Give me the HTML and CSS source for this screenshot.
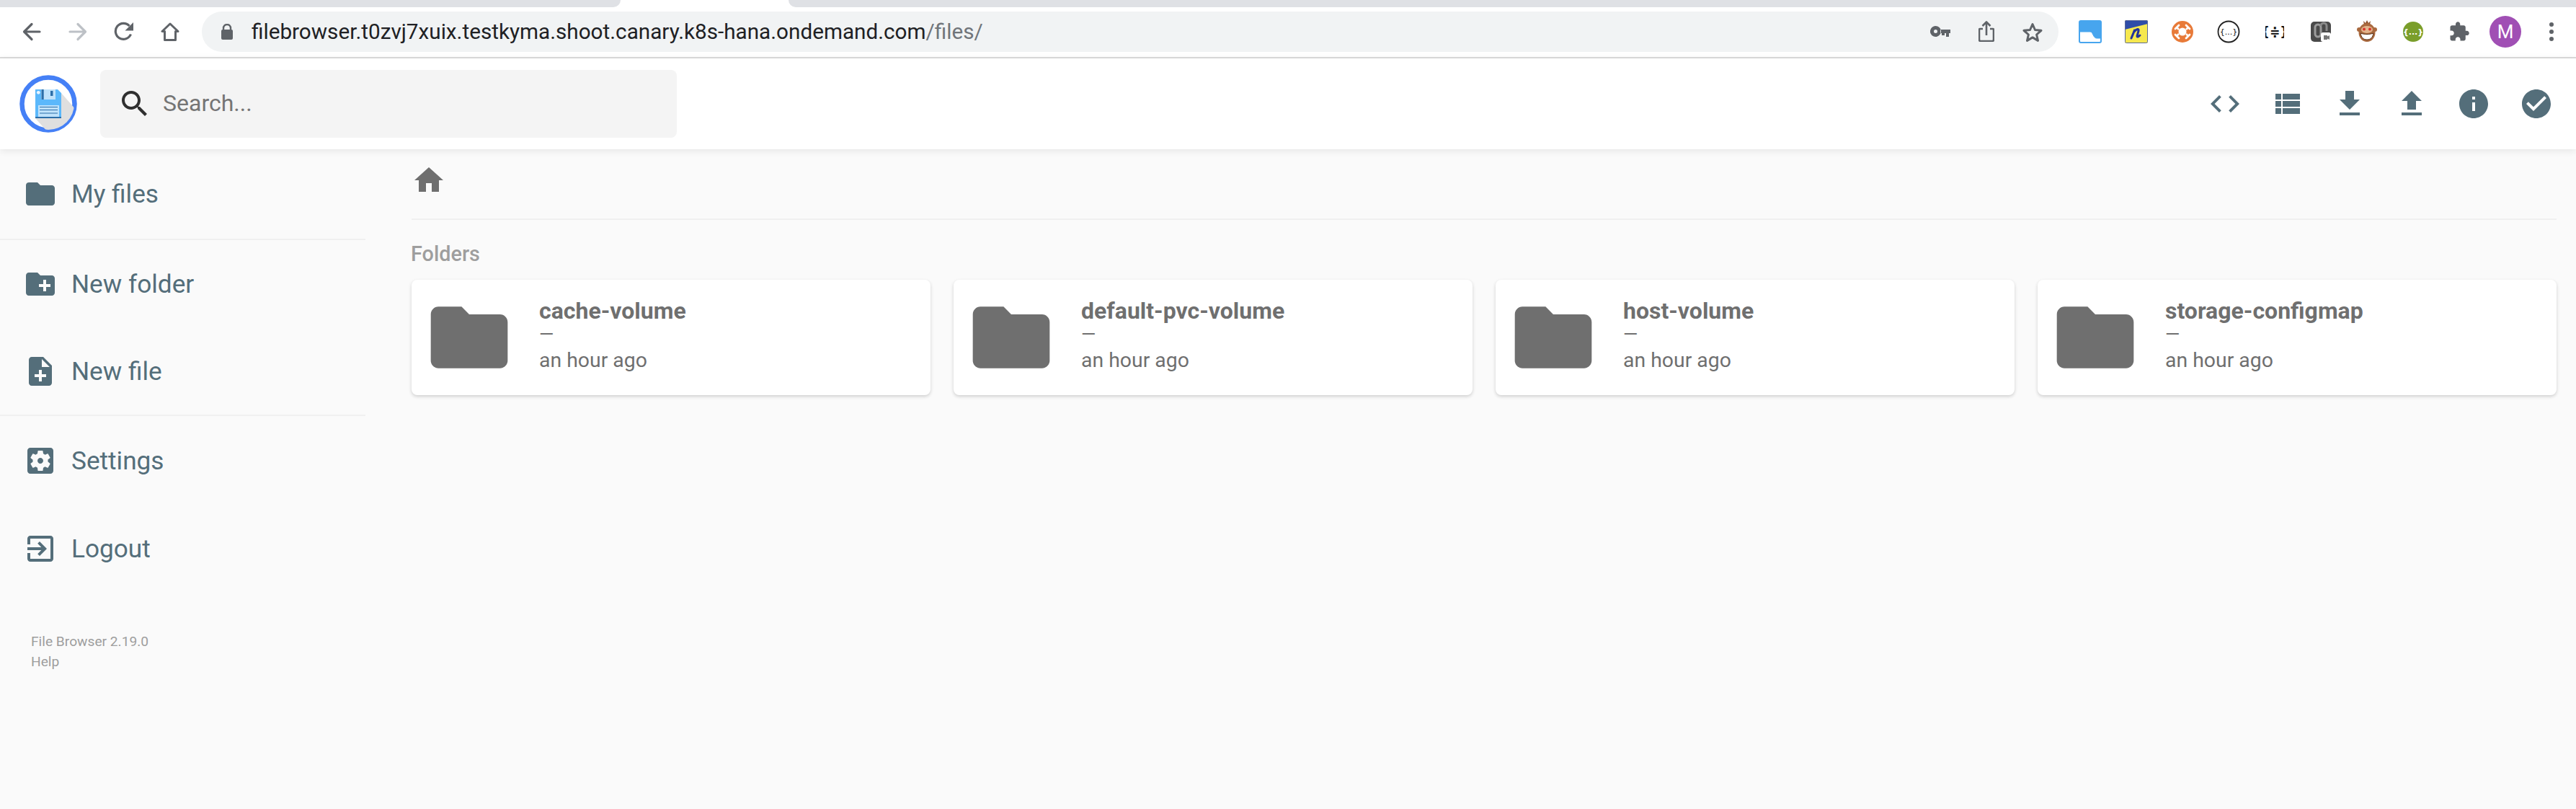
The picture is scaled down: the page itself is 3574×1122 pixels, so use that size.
FILE: index.html
```html
<!DOCTYPE html>
<html lang="en">
<head>
<meta charset="utf-8">
<title>File Browser</title>
<link rel="stylesheet" href="styles.css">
</head>
<body>
<div class="tabstrip"><div class="tab-left"></div><div class="tab-active"></div><div class="tab-right"></div></div>
<div class="toolbar">
  <div class="slot"><svg class="ic26" viewBox="0 0 26 26"><path d="M24 13H3M13 2.500 2.500 13 13 23.500" fill="none" stroke="#5f6368" stroke-width="3.200" stroke-linecap="round" stroke-linejoin="round"/></svg></div>
  <div class="slot"><svg class="ic26" viewBox="0 0 26 26"><path d="M2 13h21M13 2.500 23.500 13 13 23.500" fill="none" stroke="#bdc1c6" stroke-width="3.200" stroke-linecap="round" stroke-linejoin="round"/></svg></div>
  <div class="slot"><svg class="ic28" viewBox="0 0 28 28"><path d="M23.500 17.500A11 11 0 1 1 21.500 6" fill="none" stroke="#5f6368" stroke-width="3.200"/><path d="M27 1v11.500H15.500z" fill="#5f6368"/></svg></div>
  <div class="slot"><svg class="ic26" viewBox="0 0 26 26"><path d="M13 2 2 12.500h3.500V24.500h15V12.500H24z" fill="none" stroke="#5f6368" stroke-width="3" stroke-linejoin="round"/></svg></div>
  <div class="urlbar">
    <svg class="lock" viewBox="0 0 18 22"><path d="M4 9V6a5 5 0 0 1 10 0v3" fill="none" stroke="#5f6368" stroke-width="2.400"/><rect x="1" y="8" width="16" height="14" rx="2" fill="#5f6368"/></svg>
    <div class="url"><span class="host">filebrowser.t0zvj7xuix.testkyma.shoot.canary.k8s-hana.ondemand.com</span><span class="path">/files/</span></div>
    <svg class="key" viewBox="0 0 28 16"><path d="M7.500 0a7.500 7.500 0 1 1-6.900 10.500A7.500 7.500 0 0 1 7.500 0zm0 5a2.500 2.500 0 1 0 0 5 2.500 2.500 0 0 0 0-5zM14 5h14v5h-2v5h-4v-5h-2v3h-4v-3h-2z" fill="#5f6368" fill-rule="evenodd"/></svg>
    <svg class="share" viewBox="0 0 22 29"><path d="M6 11H2a1 1 0 0 0-1 1v14a2 2 0 0 0 2 2h16a2 2 0 0 0 2-2V12a1 1 0 0 0-1-1h-4M11 20V2M5.500 7 11 1.500 16.500 7" fill="none" stroke="#5f6368" stroke-width="2.600" stroke-linejoin="round"/></svg>
    <svg class="star" viewBox="0 0 30 28"><path d="M15 3.500l3.500 8 8.500.8-6.400 5.700 1.900 8.400L15 21.900l-7.500 4.500 1.900-8.400L3 12.300l8.500-.8z" fill="none" stroke="#5f6368" stroke-width="3" stroke-linejoin="round"/></svg>
  </div>
  <div class="extensions">
    <div class="slot"><svg class="ic32" viewBox="0 0 32 32"><rect width="32" height="32" rx="3" fill="#47a5ee"/><path d="M2 16h14c4 0 4 9 9 9h5v4a1 1 0 0 1-1 1H3a1 1 0 0 1-1-1z" fill="#fff"/><path d="M2 16h14c4 0 4 9 9 9h5" fill="none" stroke="#47a5ee" stroke-width="1"/></svg></div>
    <div class="slot"><svg class="ic32" viewBox="0 0 32 32"><rect width="32" height="32" rx="2" fill="#f6e84f"/><path d="M0 2a2 2 0 0 1 2-2h28a2 2 0 0 1 2 2v3L0 13z" fill="#2f4da8"/><path d="M9 25c3-7 4-10 5-12l-1 3c3-4 7-5 6-1l-2 7c0 2 2 1 4-1" fill="none" stroke="#22339a" stroke-width="3" stroke-linecap="round"/><rect x=".5" y=".5" width="31" height="31" rx="2" fill="none" stroke="#5b6a9a"/></svg></div>
    <div class="slot"><svg class="ic30" viewBox="0 0 30 30"><circle cx="15" cy="15" r="15" fill="#e87a38"/><circle cx="15" cy="15" r="5.500" fill="#fff"/><path d="M7 9l3 3M23 9l-3 3M7 21l3-3M23 21l-3-3" stroke="#fff" stroke-width="2.500"/><path d="M5 11l5-5M25 11l-5-5M5 19l5 5M25 19l-5 5" stroke="#fff" stroke-width="2.800" stroke-linecap="round"/></svg></div>
    <div class="slot"><svg class="ic32" viewBox="0 0 32 32"><circle cx="16" cy="16" r="14.500" fill="#fff" stroke="#222" stroke-width="1.800"/><text x="16" y="20" class="ext-text ext-small">{...}</text></svg></div>
    <div class="slot"><svg class="ic26" viewBox="0 0 26 26"><text x="13" y="19" class="ext-text ext-brace">{≑}</text></svg></div>
    <div class="slot"><svg class="ic28" viewBox="0 0 28 28"><rect width="28" height="28" rx="5" fill="#4a4a4a"/><path d="M6 8a4 4 0 0 1 8 0v9a4 4 0 0 1-8 0z" fill="none" stroke="#9b9b9b" stroke-width="3"/><path d="M14 6a4 4 0 0 1 8 0v7" fill="none" stroke="#8a8a8a" stroke-width="3"/><rect x="14" y="15" width="14" height="13" rx="3" fill="#fff"/><rect x="18" y="19" width="5" height="6" fill="#777"/><path d="M23 20.500l3-1.500v6l-3-1.500z" fill="#777"/></svg></div>
    <div class="slot"><svg class="ic-monkey" viewBox="0 0 28 32"><path d="M10 6 9 1l3 3 2-4 2 4 3-3-1 5z" fill="#8d4f2a"/><circle cx="3" cy="13" r="3" fill="#a9693e"/><circle cx="25" cy="13" r="3" fill="#a9693e"/><ellipse cx="14" cy="17" rx="11.500" ry="13" fill="#a9693e"/><ellipse cx="14" cy="13" rx="8" ry="5" fill="#e2b48c"/><circle cx="10" cy="12.500" r="2" fill="#d9342b"/><circle cx="18" cy="12.500" r="2" fill="#d9342b"/><path d="M5 18c5 2 13 2 18 0-1 6-4 9-9 9s-8-3-9-9z" fill="#fff" stroke="#5a331a"/></svg></div>
    <div class="slot"><svg class="ic28" viewBox="0 0 28 28"><circle cx="14" cy="14" r="14" fill="#7a9e2b"/><text x="14" y="18" class="ext-text ext-swagger">{...}</text></svg></div>
    <div class="slot"><svg class="ic30" viewBox="0 0 24 24"><path d="M20.500 11H19V7c0-1.100-.9-2-2-2h-4V3.500C13 2.120 11.880 1 10.500 1S8 2.120 8 3.500V5H4c-1.100 0-1.990.9-1.990 2v3.800H3.500c1.490 0 2.700 1.210 2.700 2.700s-1.210 2.700-2.700 2.700H2V20c0 1.100.9 2 2 2h3.800v-1.500c0-1.490 1.210-2.700 2.700-2.700 1.490 0 2.700 1.210 2.700 2.700V22H17c1.100 0 2-.9 2-2v-4h1.500c1.380 0 2.500-1.120 2.500-2.500S21.880 11 20.500 11z" fill="#5f6368"/></svg></div>
    <div class="slot"><div class="avatar">M</div></div>
    <div class="slot"><div class="dots"><i></i><i></i><i></i></div></div>
  </div>
</div>

<header class="header">
  <svg class="logo" viewBox="0 0 80 80">
    <defs><clipPath id="disc"><circle cx="40" cy="40" r="36"/></clipPath></defs>
    <circle cx="40" cy="40" r="36.500" fill="#fff" stroke="#4580f6" stroke-width="6.500"/>
    <path d="M58 25 80 50V80H40L22 60z" fill="#dfdfdf" clip-path="url(#disc)"/>
    <path d="M22 20h31l5 5v35H22z" fill="#5bb8fb"/>
    <rect x="30" y="20" width="20" height="14" fill="#bfe2fb"/>
    <rect x="30.500" y="20" width="3.200" height="14" fill="#2c6ea8"/>
    <rect x="43" y="22" width="3.500" height="7" fill="#2c6ea8"/>
    <circle cx="26.300" cy="24.300" r="2.400" fill="#e8f5ff"/>
    <rect x="26" y="42" width="29" height="16" fill="#bfe2fb"/>
    <path d="M28 44.500h25M28 48.500h25M28 53h25" stroke="#2c6ea8" stroke-width="1"/>
    <rect x="22" y="58" width="36" height="2" fill="#2c6ea8"/>
  </svg>
  <div class="search">
    <svg class="i48 search-ic" viewBox="0 0 24 24"><path d="M15.500 14h-.79l-.28-.27C15.410 12.590 16 11.110 16 9.500 16 5.910 13.090 3 9.500 3S3 5.910 3 9.500 5.910 16 9.500 16c1.610 0 3.090-.59 4.230-1.570l.27.28v.79l5 4.990L20.490 19l-4.990-5zm-6 0C7.010 14 5 11.990 5 9.500S7.010 5 9.500 5 14 7.010 14 9.500 11.990 14 9.500 14z"/></svg>
    <span class="search-text">Search...</span>
  </div>
  <div class="actions">
    <div class="action"><svg class="i48" viewBox="0 0 24 24"><path d="M9.400 16.600L4.800 12l4.600-4.600L8 6l-6 6 6 6 1.400-1.400zm5.200 0l4.600-4.600-4.600-4.600L16 6l6 6-6 6-1.400-1.400z"/></svg></div>
    <div class="action"><svg class="i48" viewBox="0 0 24 24"><path d="M4 14h4v-4H4v4zm0 5h4v-4H4v4zM4 9h4V5H4v4zm5 5h12v-4H9v4zm0 5h12v-4H9v4zM9 5v4h12V5H9z"/></svg></div>
    <div class="action"><svg class="i48" viewBox="0 0 24 24"><path d="M19 9h-4V3H9v6H5l7 7 7-7zM5 18v2h14v-2H5z"/></svg></div>
    <div class="action"><svg class="i48" viewBox="0 0 24 24"><path d="M9 16h6v-6h4l-7-7-7 7h4v6zm-4 2h14v2H5v-2z"/></svg></div>
    <div class="action"><svg class="i48" viewBox="0 0 24 24"><path d="M12 2C6.480 2 2 6.480 2 12s4.480 10 10 10 10-4.480 10-10S17.520 2 12 2zm1 15h-2v-6h2v6zm0-8h-2V7h2v2z"/></svg></div>
    <div class="action"><svg class="i48" viewBox="0 0 24 24"><path d="M12 2C6.480 2 2 6.480 2 12s4.480 10 10 10 10-4.480 10-10S17.520 2 12 2zm-2 15l-5-5 1.410-1.410L10 14.170l7.590-7.590L19 8l-9 9z"/></svg></div>
  </div>
</header>

<div class="main">
  <nav class="sidebar">
    <div class="nav-group nav-first">
      <div class="nav-item"><svg class="i48" viewBox="0 0 24 24"><path d="M10 4H4c-1.100 0-1.990.9-1.990 2L2 18c0 1.100.9 2 2 2h16c1.100 0 2-.9 2-2V8c0-1.100-.9-2-2-2h-8l-2-2z"/></svg><span>My files</span></div>
    </div>
    <div class="nav-group nav-second">
      <div class="nav-item"><svg class="i48" viewBox="0 0 24 24"><path d="M20 6h-8l-2-2H4c-1.110 0-1.990.89-1.990 2L2 18c0 1.110.89 2 2 2h16c1.110 0 2-.89 2-2V8c0-1.110-.89-2-2-2zm-1 8h-3v3h-2v-3h-3v-2h3V9h2v3h3v2z"/></svg><span>New folder</span></div>
      <div class="nav-item"><svg class="i48" viewBox="0 0 24 24"><path d="M14 2H6c-1.100 0-1.990.9-1.990 2L4 20c0 1.100.89 2 1.990 2H18c1.100 0 2-.9 2-2V8l-6-6zm2 14h-3v3h-2v-3H8v-2h3v-3h2v3h3v2zm-3-7V3.500L18.500 9H13z"/></svg><span>New file</span></div>
    </div>
    <div class="nav-group nav-third">
      <div class="nav-item"><svg class="i48" viewBox="0 0 24 24"><path d="M12 10c-1.100 0-2 .9-2 2s.9 2 2 2 2-.9 2-2-.9-2-2-2zm7-7H5c-1.110 0-2 .9-2 2v14c0 1.100.89 2 2 2h14c1.110 0 2-.9 2-2V5c0-1.100-.89-2-2-2zm-1.750 9c0 .23-.02.46-.05.68l1.480 1.160c.13.11.17.3.08.45l-1.400 2.420c-.09.15-.27.21-.43.15l-1.740-.7c-.36.28-.76.51-1.180.69l-.26 1.850c-.03.17-.18.3-.35.3h-2.800c-.17 0-.32-.13-.35-.29l-.26-1.850c-.43-.18-.82-.41-1.180-.69l-1.740.7c-.16.06-.34 0-.43-.15l-1.400-2.420c-.09-.15-.05-.34.08-.45l1.480-1.160c-.03-.23-.05-.46-.05-.69 0-.23.02-.46.05-.68l-1.480-1.160c-.13-.11-.17-.3-.08-.45l1.400-2.420c.09-.15.27-.21.43-.15l1.740.7c.36-.28.76-.51 1.180-.69l.26-1.850c.03-.17.18-.3.35-.3h2.800c.17 0 .32.13.35.29l.26 1.850c.43.18.82.41 1.180.69l1.740-.7c.16-.06.34 0 .43.15l1.400 2.420c.09.15.05.34-.08.45l-1.480 1.160c.03.23.05.46.05.69z"/></svg><span>Settings</span></div>
      <div class="nav-item"><svg class="i48" viewBox="0 0 24 24"><path d="M10.090 15.590L11.500 17l5-5-5-5-1.410 1.410L12.670 11H3v2h9.670l-2.580 2.590zM19 3H5c-1.110 0-2 .9-2 2v4h2V5h14v14H5v-4H3v4c0 1.100.89 2 2 2h14c1.100 0 2-.9 2-2V5c0-1.100-.9-2-2-2z"/></svg><span>Logout</span></div>
    </div>
    <div class="credits"><div>File Browser 2.19.0</div><div>Help</div></div>
  </nav>
  <main class="content">
    <div class="breadcrumbs"><svg class="i48" viewBox="0 0 24 24"><path d="M10 20v-6h4v6h5v-8h3L12 3 2 12h3v8z"/></svg></div>
    <h2 class="section-title">Folders</h2>
    <div class="cards">
      <div class="card"><svg class="card-ic" viewBox="0 0 24 24"><path d="M10 4H4c-1.100 0-1.990.9-1.990 2L2 18c0 1.100.9 2 2 2h16c1.100 0 2-.9 2-2V8c0-1.100-.9-2-2-2h-8l-2-2z"/></svg><div class="card-text"><p class="name">cache-volume</p><p class="size">—</p><p class="date">an hour ago</p></div></div>
      <div class="card"><svg class="card-ic" viewBox="0 0 24 24"><path d="M10 4H4c-1.100 0-1.990.9-1.990 2L2 18c0 1.100.9 2 2 2h16c1.100 0 2-.9 2-2V8c0-1.100-.9-2-2-2h-8l-2-2z"/></svg><div class="card-text"><p class="name">default-pvc-volume</p><p class="size">—</p><p class="date">an hour ago</p></div></div>
      <div class="card"><svg class="card-ic" viewBox="0 0 24 24"><path d="M10 4H4c-1.100 0-1.990.9-1.990 2L2 18c0 1.100.9 2 2 2h16c1.100 0 2-.9 2-2V8c0-1.100-.9-2-2-2h-8l-2-2z"/></svg><div class="card-text"><p class="name">host-volume</p><p class="size">—</p><p class="date">an hour ago</p></div></div>
      <div class="card"><svg class="card-ic" viewBox="0 0 24 24"><path d="M10 4H4c-1.100 0-1.990.9-1.990 2L2 18c0 1.100.9 2 2 2h16c1.100 0 2-.9 2-2V8c0-1.100-.9-2-2-2h-8l-2-2z"/></svg><div class="card-text"><p class="name">storage-configmap</p><p class="size">—</p><p class="date">an hour ago</p></div></div>
    </div>
  </main>
</div>
</body>
</html>
```
FILE: styles.css
```css
* { box-sizing: border-box; }
html, body { margin: 0; padding: 0; height: 100%; }
body {
  display: flex;
  flex-direction: column;
  overflow: hidden;
  background: #fafafa;
  color: #546e7a;
  font-family: Roboto, "Liberation Sans", sans-serif;
}
svg { display: block; flex: none; }
p, h2 { margin: 0; }

/* browser chrome */
.tabstrip { display: flex; height: 10px; background: #fff; flex: none; }
.tab-left { width: 861px; background: #dfe1e5; border-bottom-right-radius: 12px; }
.tab-active { width: 233px; }
.tab-right { flex: 1; background: #dfe1e5; border-bottom-left-radius: 12px; }
.toolbar {
  display: flex;
  align-items: center;
  flex: none;
  height: 71px;
  padding: 0 2px 2px 12px;
  background: #fff;
  border-bottom: 2px solid #dcdcdc;
}
.slot { width: 64px; flex: none; display: flex; align-items: center; justify-content: center; }
.ic26 { width: 26px; height: 26px; }
.ic28 { width: 28px; height: 28px; }
.ic30 { width: 30px; height: 30px; }
.ic32 { width: 32px; height: 32px; }
.ic-monkey { width: 28px; height: 32px; }
.urlbar {
  display: flex;
  align-items: center;
  width: 2576px;
  height: 56px;
  margin-left: 12px;
  margin-right: 12px;
  padding-left: 26px;
  border-radius: 28px;
  background: #f1f3f4;
}
.lock { width: 18px; height: 22px; }
.url { flex: 1; margin-left: 25px; font-size: 29.7px; line-height: 40px; white-space: nowrap; }
.host { color: #202124; }
.path { color: #70757a; }
.key { width: 28px; height: 16px; margin-right: 39px; }
.share { width: 22px; height: 29px; margin-right: 38px; }
.star { width: 30px; height: 28px; margin-right: 21px; }
.extensions { display: flex; align-items: center; flex: none; }
.ext-text { text-anchor: middle; font-family: "DejaVu Sans", sans-serif; font-weight: 700; }
.ext-small { font-size: 11px; fill: #111; font-weight: 400; }
.ext-brace { font-size: 17px; fill: #111; }
.ext-swagger { font-size: 11px; fill: #fff; }
.avatar {
  width: 44px;
  height: 44px;
  border-radius: 50%;
  background: #a04fb4;
  color: #fff;
  font-size: 26px;
  line-height: 44px;
  text-align: center;
}
.dots { display: flex; flex-direction: column; gap: 4px; }
.dots i { display: block; width: 6px; height: 6px; border-radius: 50%; background: #5f6368; }

/* app header */
.header {
  position: relative;
  z-index: 2;
  display: flex;
  align-items: center;
  flex: none;
  height: 126px;
  padding: 0 12px 0 27px;
  background: #fff;
  box-shadow: 0 2px 10px rgba(0, 0, 0, .09);
}
.logo { width: 80px; height: 80px; }
.search {
  display: flex;
  align-items: center;
  width: 800px;
  height: 94px;
  margin-left: 32px;
  padding-left: 24px;
  border-radius: 8px;
  background: #f4f4f4;
}
.i48 { width: 48px; height: 48px; fill: currentColor; }
.search-ic { color: #2f2f2f; }
.search-text { margin-left: 15px; padding-bottom: 3px; font-size: 32px; color: #757575; }
.actions { display: flex; margin-left: auto; color: #546e7a; }
.action { width: 86.4px; display: flex; justify-content: center; }

/* layout */
.main { display: flex; flex: 1; min-height: 0; }
.sidebar { width: 507px; flex: none; }
.nav-group { border-bottom: 2px solid #f0f0f0; }
.nav-first { padding: 1px 0; }
.nav-second .nav-item { height: 121px; }
.nav-third { padding-top: 1px; border-bottom: 0; }
.nav-item {
  display: flex;
  align-items: center;
  gap: 19px;
  height: 122px;
  padding-left: 32px;
  font-size: 35.2px;
  color: #546e7a;
}
.credits { margin-top: 54px; padding-left: 43px; font-size: 19.2px; line-height: 28px; color: #9e9e9e; }

.content { flex: 1; min-width: 0; padding: 0 27px 0 64px; }
.breadcrumbs { display: flex; align-items: center; height: 98px; padding-bottom: 10px; border-bottom: 2px solid #f0f0f0; color: #6f6f6f; }
.section-title { margin: 29px 0 0 -1px; font-size: 28.8px; line-height: 36px; font-weight: 500; color: #9e9e9e; }
.cards { display: grid; grid-template-columns: repeat(4, 720px); column-gap: 32px; margin-top: 18px; }
.card {
  display: flex;
  align-items: center;
  height: 160px;
  padding-left: 16px;
  border-radius: 8px;
  background: #fff;
  box-shadow: 0 2px 6px rgba(0, 0, 0, .06), 0 2px 4px rgba(0, 0, 0, .12);
  color: #6f6f6f;
}
.card-ic { width: 128px; height: 128px; fill: #6f6f6f; }
.card-text { margin-left: 33px; padding-bottom: 5px; }
.name { margin-bottom: 2px; font-size: 32px; line-height: 34px; font-weight: 700; }
.size { font-size: 26px; line-height: 27px; }
.date { margin-top: 5px; font-size: 28.4px; line-height: 36px; }
```
